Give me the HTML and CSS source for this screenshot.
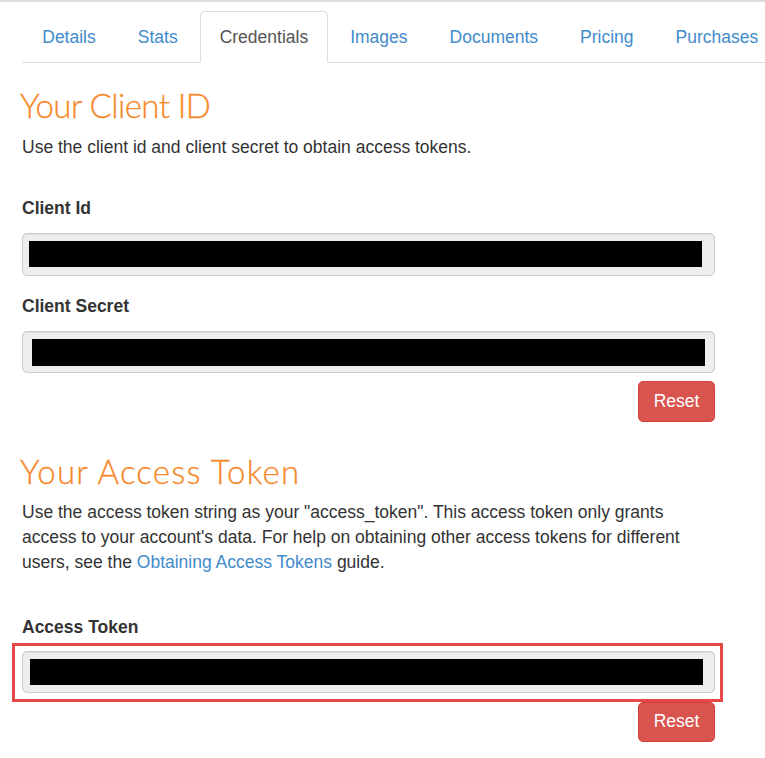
FILE: index.html
```html
<!DOCTYPE html>
<html>
<head>
<meta charset="utf-8">
<link rel="stylesheet" href="styles.css">
</head>
<body>
<div class="topline"></div>
<div class="page">
  <ul class="tabs">
    <li class="tab"><a href="#">Details</a></li>
    <li class="tab"><a href="#">Stats</a></li>
    <li class="tab active"><a href="#">Credentials</a></li>
    <li class="tab"><a href="#">Images</a></li>
    <li class="tab"><a href="#">Documents</a></li>
    <li class="tab"><a href="#">Pricing</a></li>
    <li class="tab"><a href="#">Purchases</a></li>
  </ul>

  <h2 class="title first">Your Client ID</h2>
  <p class="desc one">Use the client id and client secret to obtain access tokens.</p>

  <div class="label l-id">Client Id</div>
  <div class="field f-id"><span class="redact r-id"></span></div>

  <div class="label l-secret">Client Secret</div>
  <div class="field f-secret"><span class="redact r-secret"></span></div>
  <div class="actions a-one"><button class="btn-reset">Reset</button></div>

  <h2 class="title second">Your Access Token</h2>
  <p class="desc two">Use the access token string as your "access_token". This access token only grants access to your account's data. For help on obtaining other access tokens for different users, see the <a href="#" class="link">Obtaining Access Tokens</a> guide.</p>

  <div class="label l-token">Access Token</div>
  <div class="highlight">
    <div class="field f-token"><span class="redact r-token"></span></div>
  </div>
  <div class="actions a-two"><button class="btn-reset">Reset</button></div>
</div>
</body>
</html>
```

FILE: styles.css
```css
html, body {
  margin: 0;
  padding: 0;
  background: #fff;
}
body {
  font-family: "Liberation Sans", Arial, sans-serif;
  font-size: 17.5px;
  color: #333;
  width: 765px;
  overflow: hidden;
}
.topline {
  height: 2px;
  background: #dcdcdc;
}
.page {
  padding-left: 22px;
  width: 693px;
}
.tabs {
  list-style: none;
  margin: 9px -60px 0 0;
  padding: 0 0 0 0.5px;
  display: flex;
  border-bottom: 1px solid #ddd;
  height: 51px;
  white-space: nowrap;
}
.tab {
  margin-right: 2.5px;
  margin-bottom: -1px;
  display: flex;
}
.tab a {
  display: block;
  padding: 1px 18.75px 0;
  line-height: 48px;
  border: 1px solid transparent;
  border-radius: 5px 5px 0 0;
  color: #428bca;
  text-decoration: none;
}
.tab.active a {
  color: #555;
  border-color: #ddd;
  border-bottom-color: #fff;
  background: #fff;
}
.title {
  font-family: "Lato", "DejaVu Sans", sans-serif;
  font-weight: 300;
  color: #f5892b;
  font-size: 33px;
  line-height: 40px;
  margin: 0;
  -webkit-text-stroke: 0.3px #f5892b;
}
.title.first { margin-top: 22px; margin-left: -2px; letter-spacing: -0.6px; }
.title.second { margin-top: 29px; margin-left: -2px; letter-spacing: 1.2px; }
.desc {
  margin: 0;
  line-height: 25px;
}
.desc.one { margin-top: 10px; }
.desc.two { margin-top: 8.5px; width: 690px; }
.link {
  color: #428bca;
  text-decoration: none;
}
.label {
  font-weight: bold;
  line-height: 25px;
}
.l-id { margin-top: 36px; }
.l-secret { margin-top: 18px; }
.l-token { margin-top: 40px; }
.field {
  box-sizing: border-box;
  height: 43px;
  background: #eee;
  border: 1px solid #ccc;
  border-radius: 5px;
  box-shadow: inset 0 1px 1px rgba(0,0,0,0.075);
  display: flex;
}
.f-id { margin-top: 12px; }
.f-secret { margin-top: 12px; height: 42px; }
.redact {
  display: block;
  background: #000;
  height: 26px;
}
.r-id { margin: 7px 0 0 6px; width: 673px; }
.r-secret { margin: 7px 0 0 9px; width: 673px; height: 27px; }
.r-token { margin: 7px 0 0 7px; width: 673px; }
.f-token { height: 42px; }
.highlight {
  margin: 3px 0 0 -10px;
  width: 711px;
  box-sizing: border-box;
  border: 3px solid #e64848;
  padding: 5px 5px 6px 7px;
}
.actions {
  display: flex;
  justify-content: flex-end;
}
.a-one { margin-top: 8px; }
.a-two { margin-top: 0; }
.btn-reset {
  font-family: "Liberation Sans", Arial, sans-serif;
  font-size: 17.5px;
  color: #fff;
  background: #d9534f;
  border: 1px solid #d43f3a;
  border-radius: 5px;
  width: 77px;
  height: 41px;
  padding: 0;
  cursor: pointer;
}
.a-two .btn-reset { height: 40px; }
```
